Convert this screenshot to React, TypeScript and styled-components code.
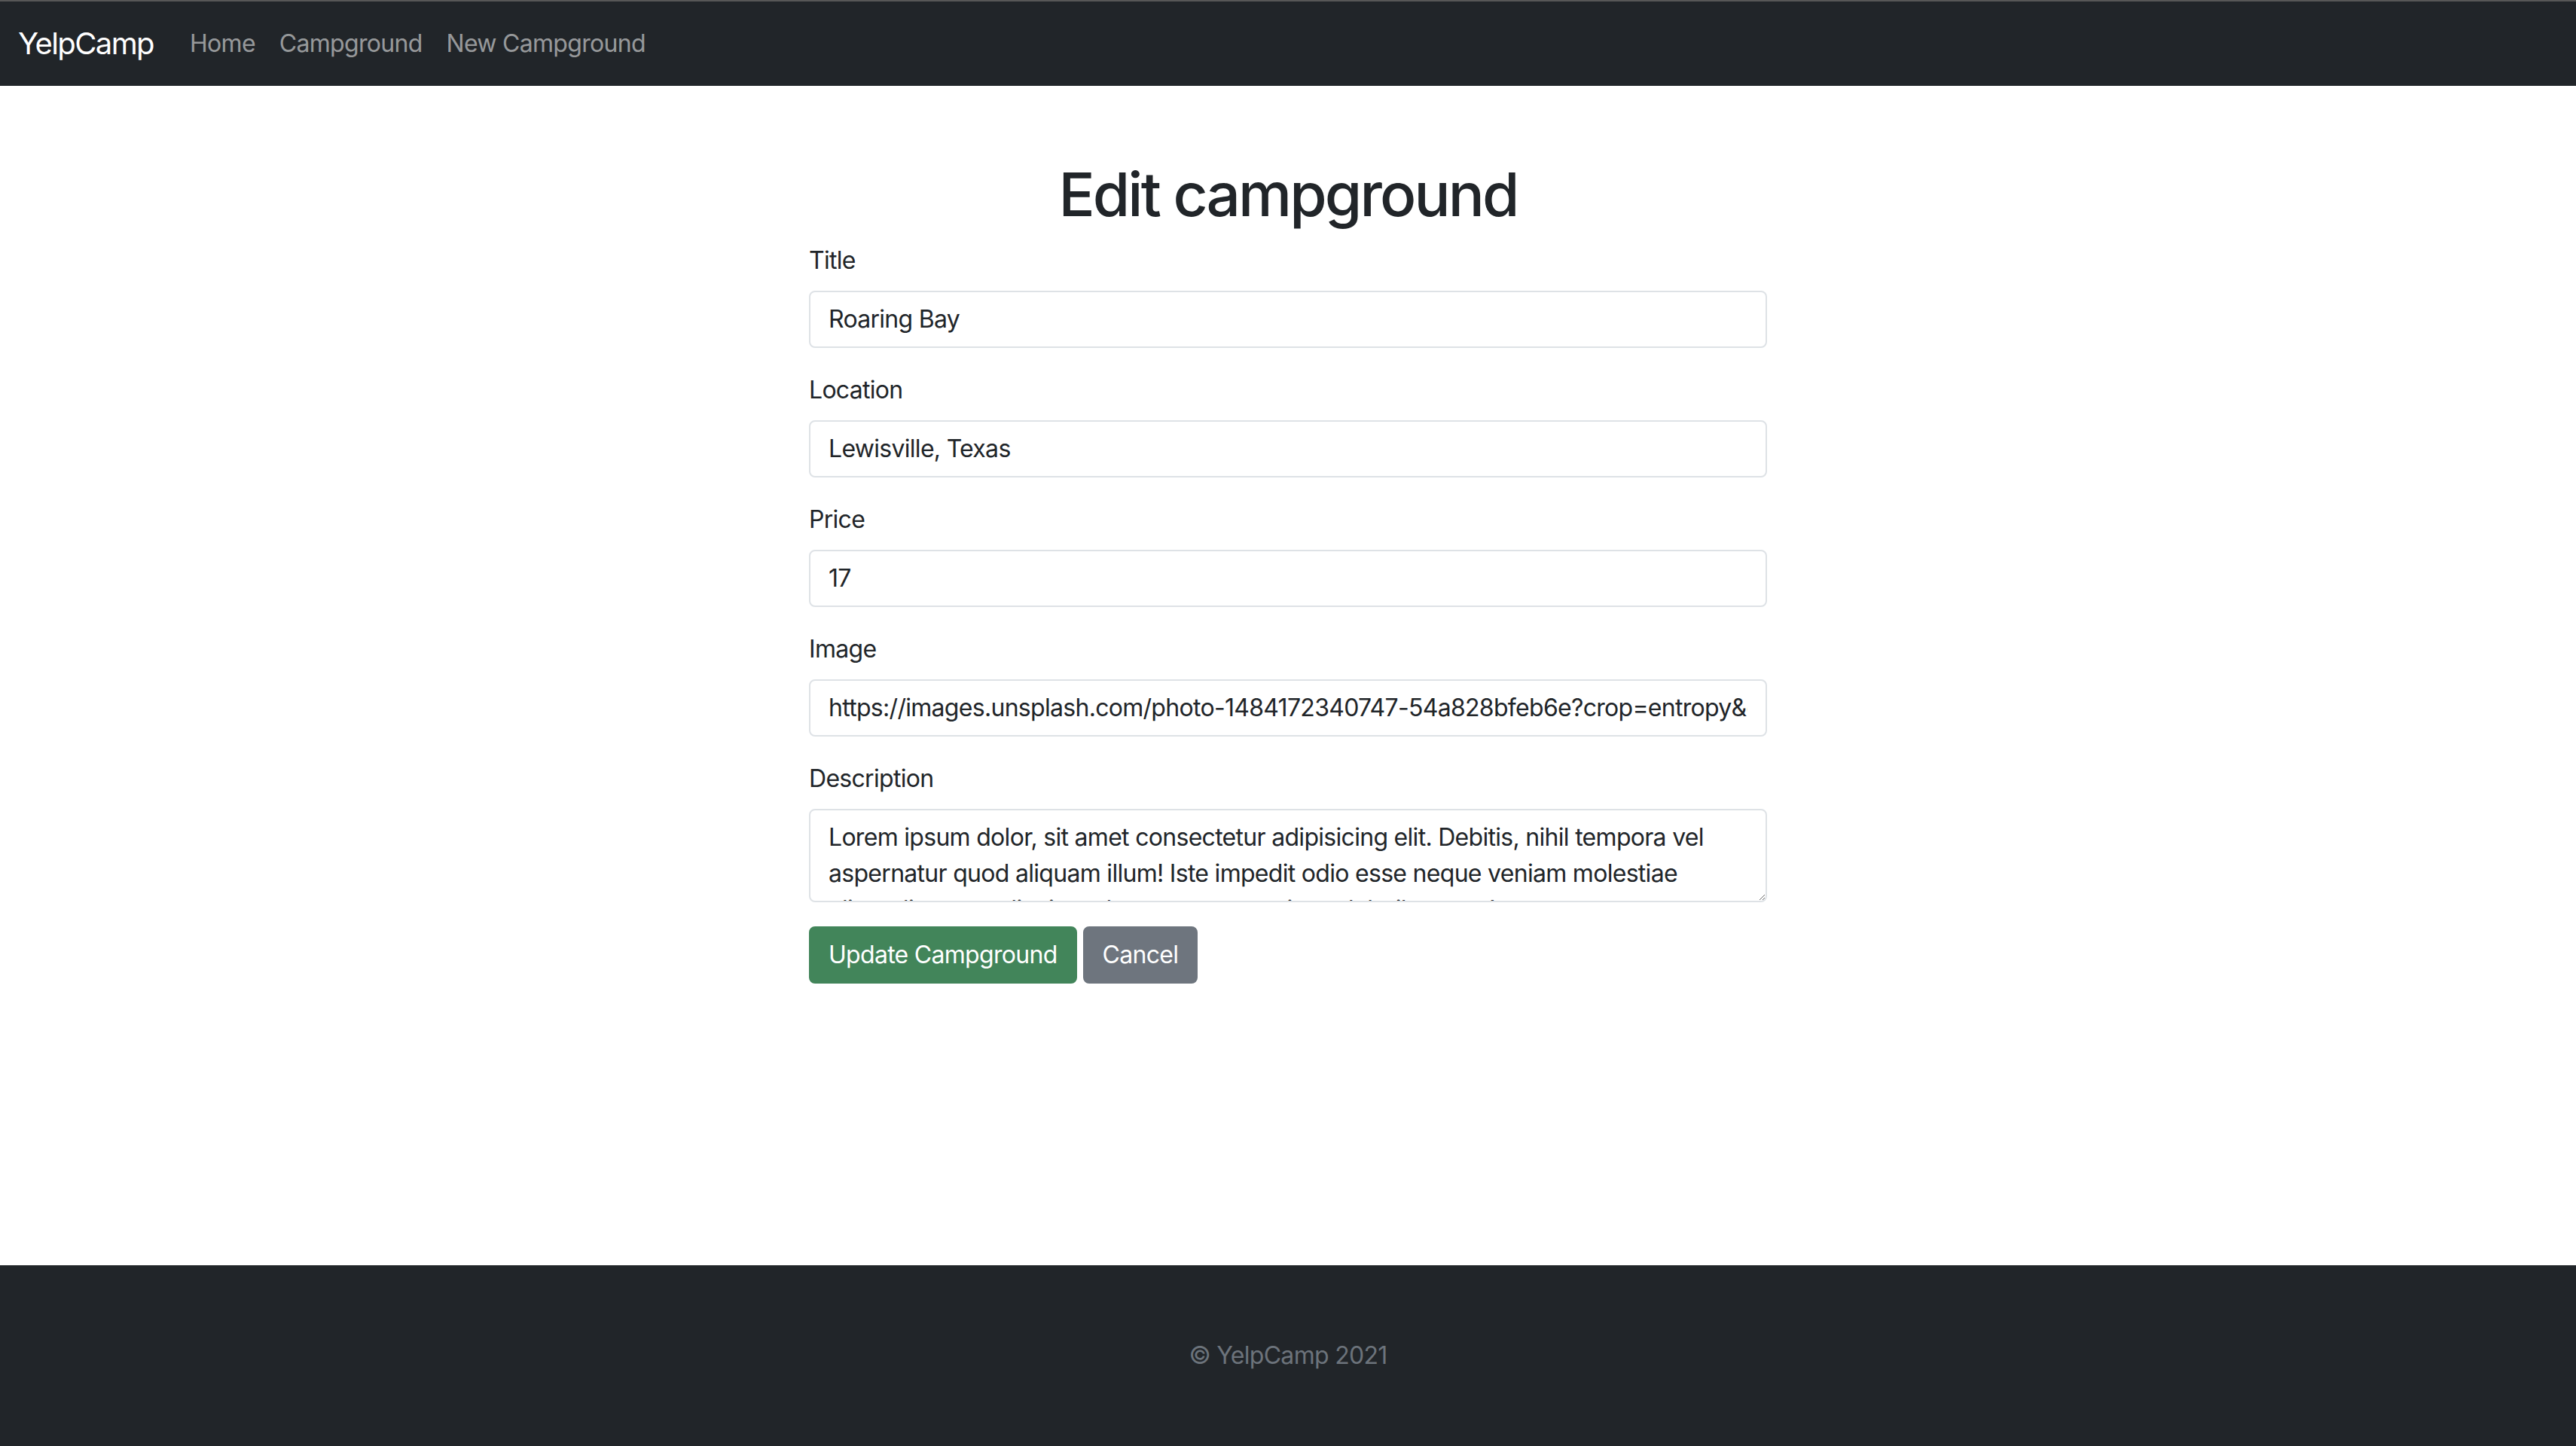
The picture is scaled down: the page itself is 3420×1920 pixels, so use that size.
import React from "react";
import styled, { createGlobalStyle } from "styled-components";

const GlobalStyle = createGlobalStyle`
  *, *::before, *::after { box-sizing: border-box; }
  html, body { margin: 0; padding: 0; }
  body {
    font-family: Inter, "Noto Sans", "Liberation Sans", sans-serif;
    font-size: 32px;
    line-height: 1.5;
    letter-spacing: -0.022em;
    color: #212529;
    background: #fff;
  }
`;

const Page = styled.div`
  display: flex;
  flex-direction: column;
  min-height: 100vh;
`;

const Navbar = styled.nav`
  display: flex;
  align-items: center;
  background: #212529;
  border-top: 2px solid #575757;
  padding: 16px 24px;
`;

const Brand = styled.a`
  color: #fff;
  font-size: 40px;
  line-height: 1.5;
  letter-spacing: -0.04em;
  padding: 10px 0;
  margin-right: 32px;
  text-decoration: none;
  white-space: nowrap;
`;

const NavList = styled.div`
  display: flex;
  align-items: center;
`;

const NavLink = styled.a`
  color: rgba(255, 255, 255, 0.55);
  padding: 16px;
  text-decoration: none;
  line-height: 1.5;
  white-space: nowrap;
`;

const Main = styled.main`
  width: 100%;
  max-width: 2640px;
  margin: 96px auto 0;
  padding: 0 24px;
`;

const Row = styled.div`
  display: flex;
  margin: 0 -24px;
`;

const Column = styled.div`
  flex: 0 0 auto;
  width: 50%;
  margin-left: 25%;
  padding: 0 24px;
`;

const Heading = styled.h1`
  font-size: 80px;
  font-weight: 500;
  line-height: 1.2;
  letter-spacing: -0.036em;
  text-align: center;
  margin: 0 0 16px;
`;

const Form = styled.form`
  display: flex;
  flex-direction: column;
`;

const Field = styled.div`
  margin-bottom: 32px;
`;

const Label = styled.label`
  display: inline-block;
  margin-bottom: 16px;
  line-height: 1.5;
`;

const inputBase = `
  display: block;
  width: 100%;
  padding: 12px 24px;
  font-family: Inter, "Noto Sans", "Liberation Sans", sans-serif;
  font-size: 32px;
  font-weight: 400;
  line-height: 1.5;
  letter-spacing: -0.022em;
  color: #212529;
  background: #fff;
  border: 2px solid #dee2e6;
  border-radius: 8px;
  outline: none;
  margin: 0;
`;

const Input = styled.input`
  ${inputBase}
`;

const TextArea = styled.textarea`
  ${inputBase}
  height: 124px;
  resize: vertical;
  overflow: hidden;
`;

const ButtonRow = styled.div`
  display: flex;
  gap: 8px;
`;

const Button = styled.button<{ $variant: "success" | "secondary" }>`
  font-family: Inter, "Noto Sans", "Liberation Sans", sans-serif;
  font-size: 32px;
  line-height: 1.5;
  letter-spacing: -0.022em;
  color: #fff;
  padding: 12px 24px;
  border: 2px solid ${(p) => (p.$variant === "success" ? "#42855a" : "#6e757e")};
  background: ${(p) => (p.$variant === "success" ? "#42855a" : "#6e757e")};
  border-radius: 8px;
  cursor: pointer;
`;

const Footer = styled.footer`
  margin-top: auto;
  background: #212529;
  padding: 96px 0;
  text-align: center;
  color: #6c737b;
  line-height: 1.5;
`;

const description =
  "Lorem ipsum dolor, sit amet consectetur adipisicing elit. Debitis, nihil tempora vel aspernatur quod aliquam illum! Iste impedit odio esse neque veniam molestiae eligendi commodi minus, beatae accusantium, doloribus quo!";

const imageUrl =
  "https://images.unsplash.com/photo-1484172340747-54a828bfeb6e?crop=entropy&cs=tinysrgb&fit=max&fm=jpg&w=1080";

export default function App() {
  return (
    <>
      <GlobalStyle />
      <Page>
        <Navbar>
          <Brand href="#">YelpCamp</Brand>
          <NavList>
            <NavLink href="#">Home</NavLink>
            <NavLink href="#">Campground</NavLink>
            <NavLink href="#">New Campground</NavLink>
          </NavList>
        </Navbar>
        <Main>
          <Row>
            <Column>
              <Heading>Edit campground</Heading>
              <Form onSubmit={(e) => e.preventDefault()}>
                <Field>
                  <Label htmlFor="title">Title</Label>
                  <Input id="title" type="text" defaultValue="Roaring Bay" />
                </Field>
                <Field>
                  <Label htmlFor="location">Location</Label>
                  <Input id="location" type="text" defaultValue="Lewisville, Texas" />
                </Field>
                <Field>
                  <Label htmlFor="price">Price</Label>
                  <Input id="price" type="text" defaultValue="17" />
                </Field>
                <Field>
                  <Label htmlFor="image">Image</Label>
                  <Input id="image" type="text" defaultValue={imageUrl} />
                </Field>
                <Field>
                  <Label htmlFor="description">Description</Label>
                  <TextArea id="description" defaultValue={description} />
                </Field>
                <ButtonRow>
                  <Button $variant="success" type="submit">Update Campground</Button>
                  <Button $variant="secondary" type="button">Cancel</Button>
                </ButtonRow>
              </Form>
            </Column>
          </Row>
        </Main>
        <Footer>© YelpCamp 2021</Footer>
      </Page>
    </>
  );
}
